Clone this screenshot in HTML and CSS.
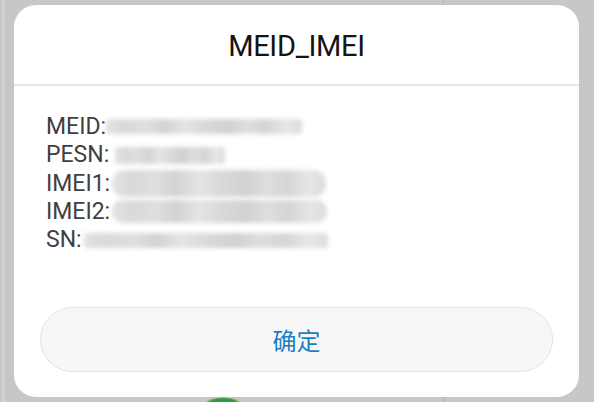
FILE: index.html
```html
<!DOCTYPE html>
<html lang="zh">
<head>
<meta charset="utf-8">
<title>MEID_IMEI</title>
<link rel="stylesheet" href="styles.css">
</head>
<body>
<div class="dialog">
  <div class="header"><span class="title">MEID_IMEI</span></div>
  <div class="divider"></div>
  <div class="content">
    <div class="row">MEID:<span class="blur b-meid"></span></div>
    <div class="row">PESN:<span class="blur b-pesn"></span></div>
    <div class="row">IMEI1:<span class="blur b-imei1"></span></div>
    <div class="row">IMEI2:<span class="blur b-imei2"></span></div>
    <div class="row">SN:<span class="blur b-sn"></span></div>
  </div>
  <div class="actions">
    <div class="btn">确定</div>
  </div>
</div>
</body>
</html>
```
FILE: styles.css
```css
html, body {
  margin: 0;
  padding: 0;
}
body {
  width: 594px;
  height: 402px;
  overflow: hidden;
  font-family: Roboto, "Noto Sans CJK SC", sans-serif;
  background:
    radial-gradient(ellipse 18px 6px at 223px 403px, #2f9b3c 0, #2f9b3c 70%, rgba(47,155,60,0) 100%),
    linear-gradient(to right, transparent 443px, #b4b4b4 443px, #b4b4b4 444px, transparent 444px),
    linear-gradient(to right, transparent 2px, #d2d2d2 2px, #d2d2d2 5px, transparent 5px),
    #c7c7c7;
  padding-top: 5px;
  box-sizing: border-box;
}
.dialog {
  margin-left: 14px;
  width: 565px;
  height: 392px;
  background: #fff;
  border-radius: 22px;
  display: flex;
  flex-direction: column;
}
.header {
  height: 79px;
  display: flex;
  align-items: center;
  justify-content: center;
}
.title {
  font-size: 29px;
  color: #141414;
  letter-spacing: -0.3px;
  padding-top: 2px;
}
.divider {
  height: 2px;
  background: #e6e6e6;
}
.content {
  padding: 27px 0 0 32px;
  font-size: 23px;
  line-height: 28.25px;
  color: #404040;
}
.row {
  display: flex;
  align-items: center;
  height: 28.25px;
}
.blur {
  display: inline-block;
  filter: blur(2px);
  background: linear-gradient(to right,
    #e2e2e2 0%, #d9d9d9 10%, #dfdfdf 20%, #d3d3d3 30%, #e4e4e4 40%,
    #dadada 50%, #d1d1d1 62%, #dedede 72%, #d5d5d5 82%, #e6e6e6 92%, #dcdcdc 100%);
  border-radius: 3px;
}
.b-meid { width: 196px; height: 15px; margin-top: -2px; }
.b-pesn { width: 110px; height: 17px; margin-left: 6px; }
.b-imei1 { width: 214px; height: 27px; border-radius: 13px; margin-left: 2px; }
.b-imei2 { width: 215px; height: 23px; border-radius: 11px; margin-left: 2px; }
.b-sn { width: 244px; height: 15px; margin-left: 2px; }
.actions {
  margin-top: auto;
  padding: 0 26px 25px 26px;
}
.btn {
  height: 63px;
  border: 1px solid #e3e3e3;
  border-radius: 33px;
  background: #f7f7f7;
  display: flex;
  align-items: center;
  justify-content: center;
  color: #1c7fc3;
  font-size: 24px;
  font-family: "Noto Sans CJK SC", sans-serif;
}
```
